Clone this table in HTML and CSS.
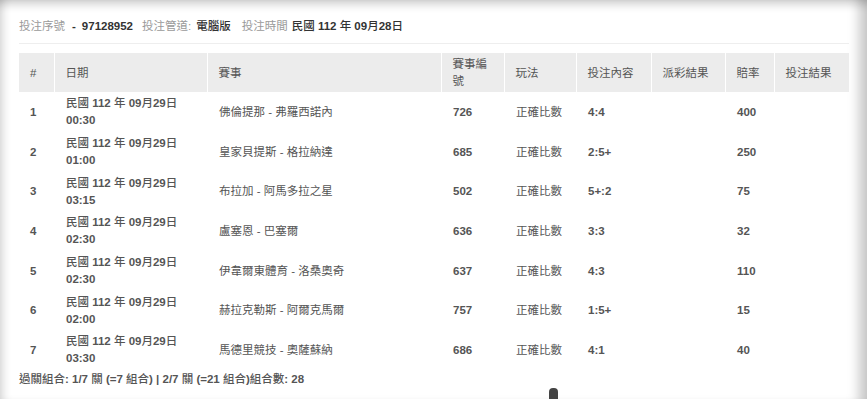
FILE: index.html
```html
<!DOCTYPE html>
<html lang="zh-Hant">
<head>
<meta charset="utf-8">
<title>投注明細</title>
<link rel="stylesheet" href="styles.css">
</head>
<body>
<div class="panel">
  <div class="info">
    <span class="label">投注序號</span><span class="val dash">-</span><span class="val">97128952</span>
    <span class="label near">投注管道:</span><span class="val"><span class="cj">電腦版</span></span>
    <span class="label">投注時間</span><span class="val tight"><span class="cj">民國</span> 112 <span class="cj">年</span> 09<span class="cj">月</span>28<span class="cj">日</span></span>
  </div>
  <div class="rule"></div>
  <table class="bets">
    <colgroup>
      <col style="width:35px"><col style="width:153px"><col style="width:234px"><col style="width:63px"><col style="width:72px"><col style="width:75px"><col style="width:74px"><col style="width:49px"><col style="width:75px">
    </colgroup>
    <thead>
      <tr><th>#</th><th>日期</th><th>賽事</th><th>賽事編號</th><th>玩法</th><th>投注內容</th><th>派彩結果</th><th>賠率</th><th>投注結果</th></tr>
    </thead>
    <tbody>
      <tr><td class="b">1</td><td class="b"><span class="cj">民國</span> 112 <span class="cj">年</span> 09<span class="cj">月</span>29<span class="cj">日</span><br>00:30</td><td>佛倫提那 - 弗羅西諾內</td><td class="b">726</td><td>正確比數</td><td class="b">4:4</td><td></td><td class="b">400</td><td></td></tr>
      <tr><td class="b">2</td><td class="b"><span class="cj">民國</span> 112 <span class="cj">年</span> 09<span class="cj">月</span>29<span class="cj">日</span><br>01:00</td><td>皇家貝提斯 - 格拉納達</td><td class="b">685</td><td>正確比數</td><td class="b">2:5+</td><td></td><td class="b">250</td><td></td></tr>
      <tr><td class="b">3</td><td class="b"><span class="cj">民國</span> 112 <span class="cj">年</span> 09<span class="cj">月</span>29<span class="cj">日</span><br>03:15</td><td>布拉加 - 阿馬多拉之星</td><td class="b">502</td><td>正確比數</td><td class="b">5+:2</td><td></td><td class="b">75</td><td></td></tr>
      <tr><td class="b">4</td><td class="b"><span class="cj">民國</span> 112 <span class="cj">年</span> 09<span class="cj">月</span>29<span class="cj">日</span><br>02:30</td><td>盧塞恩 - 巴塞爾</td><td class="b">636</td><td>正確比數</td><td class="b">3:3</td><td></td><td class="b">32</td><td></td></tr>
      <tr><td class="b">5</td><td class="b"><span class="cj">民國</span> 112 <span class="cj">年</span> 09<span class="cj">月</span>29<span class="cj">日</span><br>02:30</td><td>伊韋爾東體育 - 洛桑奧奇</td><td class="b">637</td><td>正確比數</td><td class="b">4:3</td><td></td><td class="b">110</td><td></td></tr>
      <tr><td class="b">6</td><td class="b"><span class="cj">民國</span> 112 <span class="cj">年</span> 09<span class="cj">月</span>29<span class="cj">日</span><br>02:00</td><td>赫拉克勒斯 - 阿爾克馬爾</td><td class="b">757</td><td>正確比數</td><td class="b">1:5+</td><td></td><td class="b">15</td><td></td></tr>
      <tr><td class="b">7</td><td class="b"><span class="cj">民國</span> 112 <span class="cj">年</span> 09<span class="cj">月</span>29<span class="cj">日</span><br>03:30</td><td>馬德里競技 - 奧薩蘇納</td><td class="b">686</td><td>正確比數</td><td class="b">4:1</td><td></td><td class="b">40</td><td></td></tr>
    </tbody>
  </table>
  <div class="summary"><span class="cj">過關組合</span>: 1/7 <span class="cj">關</span> (=7 <span class="cj">組合</span>) | 2/7 <span class="cj">關</span> (=21 <span class="cj">組合</span>)<span class="cj">組合數</span>: 28</div>
  <div class="thumb"></div>
</div>
</body>
</html>
```

FILE: styles.css
```css
html, body {
  margin: 0;
  padding: 0;
  background: #fff;
}
body {
  font-family: "Liberation Sans", "Noto Sans CJK TC", Arial, sans-serif;
  font-size: 11.5px;
  line-height: 17px;
  color: #555;
}
.panel {
  position: relative;
  width: 867px;
  height: 399px;
  box-sizing: border-box;
  padding: 18px 18px 0 19px;
  overflow: hidden;
  box-shadow:
    inset 9px 0 8px -6px rgba(0, 0, 0, 0.16),
    inset 0 11px 10px -7px rgba(0, 0, 0, 0.2),
    inset -16px 0 12px -8px rgba(0, 0, 0, 0.22);
}
.info {
  height: 17px;
  white-space: nowrap;
  font-size: 0;
}
.info > span {
  font-size: 11.5px;
}
.label {
  color: #9a9a9a;
  margin-left: 11px;
}
.label:first-child {
  margin-left: 0;
}
.label.near {
  margin-left: 9px;
}
.val {
  color: #333;
  font-weight: bold;
  margin-left: 5px;
}
.val.tight {
  margin-left: 4px;
}
.dash {
  margin: 0 6px 0 7px;
}
.dash + .val {
  margin-left: 0;
}
.cj {
  font-weight: 500;
}
.rule {
  margin-top: 8px;
  height: 1px;
  background: #eeeeee;
}
.bets {
  margin-top: 9px;
  width: 830px;
  table-layout: fixed;
  border-collapse: collapse;
}
.bets th {
  background: #ececec;
  font-weight: normal;
  color: #555;
  text-align: left;
  padding: 3px 11px 2px 11px;
  border-left: 1px solid #fff;
  height: 34px;
  vertical-align: middle;
}
.bets th:first-child {
  border-left: 0;
}
.bets td {
  padding: 3px 11px 2px 12px;
  height: 34.7px;
  vertical-align: middle;
  color: #555;
}
.bets td:first-child {
  padding-left: 11px;
}
.bets td.b {
  font-weight: bold;
}
.summary {
  margin-top: 1px;
  font-weight: bold;
  color: #555;
}
.thumb {
  position: absolute;
  left: 549px;
  top: 388px;
  width: 9px;
  height: 14px;
  border-radius: 4px 4px 0 0;
  background: #444;
}
```
